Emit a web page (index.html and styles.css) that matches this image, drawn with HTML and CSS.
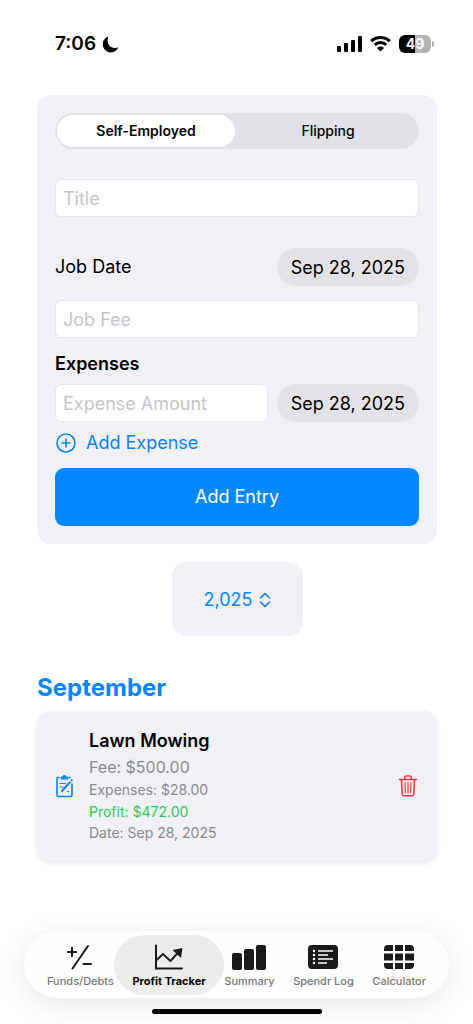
FILE: index.html
```html
<!DOCTYPE html>
<html lang="en">
<head>
<meta charset="utf-8">
<meta name="viewport" content="width=device-width, initial-scale=1">
<title>Profit Tracker</title>
<link rel="stylesheet" href="styles.css">
</head>
<body>
<div class="app">
  <header class="status">
    <div class="status-group">
      <span class="time">7:06</span>
      <svg class="moon" viewBox="0 0 17 17" aria-hidden="true"><path d="M6.200.6C3 1.800.8 4.800.8 8.300c0 4.500 3.500 8.100 8 8.100 3.500 0 6.300-1.900 7.500-5.100-1 .5-2 .7-3.100.7-4.500 0-7.600-3.100-7.600-7.500 0-1.400.1-2.700.6-3.900z"/></svg>
    </div>
    <div class="status-group">
      <svg class="signal" viewBox="0 0 25 16" aria-hidden="true"><rect y="10" width="4" height="6" rx="1"/><rect x="7" y="7" width="4" height="9" rx="1"/><rect x="14" y="4" width="4" height="12" rx="1"/><rect x="21" width="4" height="16" rx="1"/></svg>
      <svg class="wifi" viewBox="0 0 21 16" aria-hidden="true"><path class="arc" d="M1.200 5.200a13.400 13.400 0 0 1 18.600 0M4.800 8.900a8.200 8.200 0 0 1 11.400 0"/><path d="M10.500 15.500 7 12a5 5 0 0 1 7 0z"/></svg>
      <div class="battery"><span class="battery-level">49</span></div>
    </div>
  </header>

  <main class="content">
    <form class="card entry-form">
      <fieldset class="segmented" aria-label="Entry type">
        <label class="segment"><input type="radio" name="type" checked><span>Self-Employed</span></label>
        <label class="segment"><input type="radio" name="type"><span>Flipping</span></label>
      </fieldset>
      <input class="field title-field" type="text" placeholder="Title" aria-label="Title">
      <div class="row date-row">
        <span id="job-date">Job Date</span>
        <button class="date-pill" type="button" aria-describedby="job-date">Sep 28, 2025</button>
      </div>
      <input class="field" type="text" placeholder="Job Fee" aria-label="Job Fee">
      <h2 class="label">Expenses</h2>
      <div class="row">
        <input class="field" type="text" placeholder="Expense Amount" aria-label="Expense Amount">
        <button class="date-pill" type="button">Sep 28, 2025</button>
      </div>
      <button class="add-expense" type="button">
        <svg class="plus" viewBox="0 0 20 20" aria-hidden="true"><circle cx="10" cy="10" r="9"/><path d="M10 6v8M6 10h8"/></svg>
        Add Expense
      </button>
      <button class="submit" type="button">Add Entry</button>
    </form>

    <label class="year">
      <select class="year-select" aria-label="Year"><option>2,025</option></select>
      <svg class="chevrons" viewBox="0 0 12 16" aria-hidden="true"><path d="m1.500 6L6 1.500 10.500 6M1.500 10 6 14.500l4.500-4.500"/></svg>
    </label>

    <section class="month">
      <h2 class="month-title">September</h2>
      <article class="card job">
        <button class="icon-button" type="button" aria-label="Edit Lawn Mowing">
          <svg class="edit" viewBox="0 0 18 24" aria-hidden="true"><path d="M4 3.500H3.500A1.500 1.500 0 0 0 2 5v16a1.500 1.500 0 0 0 1.500 1.500h12A1.500 1.500 0 0 0 17 21V10M14 3.500h.8"/><path class="notes" d="M5 9.500h5.500M5 13h3M12.500 17.500h1"/><path class="pencil" d="M7 17l7.800-8.700M16.500 6.400l.3-.3"/><path class="clip" d="M6 4.700V3.200h1.600a1.800 1.800 0 0 1 3.600 0h1.600v1.500z"/></svg>
        </button>
        <div class="details">
          <h3 class="job-title">Lawn Mowing</h3>
          <p class="fee">Fee: $500.00</p>
          <p>Expenses: $28.00</p>
          <p class="profit">Profit: $472.00</p>
          <p>Date: Sep 28, 2025</p>
        </div>
        <button class="icon-button" type="button" aria-label="Delete Lawn Mowing">
          <svg class="trash" viewBox="0 0 18 22" aria-hidden="true"><path d="M.5 4.500h17M2.500 4.500l.7 14.700a1.700 1.700 0 0 0 1.700 1.600h8.200a1.700 1.700 0 0 0 1.700-1.600l.7-14.700M5.800 4.500V2.300a1.300 1.300 0 0 1 1.300-1.300h3.800a1.300 1.300 0 0 1 1.300 1.300v2.200"/><path class="slats" d="m6 7.500.3 10.500M9 7.500V18M12 7.500 11.700 18"/></svg>
        </button>
      </article>
    </section>
  </main>

  <footer class="bottom">
    <nav class="tabs" aria-label="Main">
      <a class="tab" href="#funds"><svg viewBox="0 0 32 26" aria-hidden="true"><g class="line"><path d="M8.500 24.500 24 2M4 8h8M8 4v8M19.500 20H27"/></g></svg>Funds/Debts</a>
      <a class="tab active" href="#profit" aria-current="page"><svg viewBox="0 0 32 26" aria-hidden="true"><g class="line"><path d="M3 1.500V24.500h26M3.500 16l6.500-6 7.500 7 8-9"/></g><path d="m19.500 6 10-2-1.500 10z"/></svg>Profit Tracker</a>
      <a class="tab" href="#summary"><svg class="bars" viewBox="0 0 34 26" aria-hidden="true"><rect x="0" y="9" width="10" height="17" rx="2"/><rect x="12" y="5" width="10" height="21" rx="2"/><rect x="24" y="1" width="10" height="25" rx="2"/></svg>Summary</a>
      <a class="tab" href="#log"><svg viewBox="0 0 32 26" aria-hidden="true"><rect x="1" y="1" width="30" height="24" rx="4"/><g class="rows"><path d="M11 7h15M11 11h10M11 15h15M11 19h9"/><path class="dots" d="M7 7h0M7 11h0M7 15h0M7 19h0"/></g></svg>Spendr Log</a>
      <a class="tab" href="#calculator"><svg viewBox="0 0 32 26" aria-hidden="true"><path d="M5 1h5v6H1V5a4 4 0 0 1 4-4zM12 1h8v6h-8zM22 1h5a4 4 0 0 1 4 4v2h-9zM1 9.500h9v7H1zM12 9.500h8v7h-8zM22 9.500h9v7h-9zM1 19h9v6H5a4 4 0 0 1-4-4zM12 19h8v6h-8zM22 19h9v2a4 4 0 0 1-4 4h-5z"/></svg>Calculator</a>
    </nav>
    <div class="home-indicator"></div>
  </footer>
</div>
</body>
</html>
```

FILE: styles.css
```css
* { box-sizing: border-box; }

body {
  margin: 0;
  background: #fff;
  color: #000;
  font-family: Inter, "Liberation Sans", sans-serif;
  font-size: 18px;
  line-height: 24px;
}

button, input, select { font: inherit; color: inherit; }
button { border: 0; padding: 0; background: none; cursor: pointer; }
h2, h3, p { margin: 0; }
svg { display: block; fill: currentColor; }

.app {
  display: flex;
  flex-direction: column;
  min-height: 100vh;
  overflow: hidden;
}

.status {
  display: flex;
  justify-content: space-between;
  padding: 32px 42px 39px 55px;
}
.status-group { display: flex; align-items: center; gap: 8px; }
.status-group:first-child { gap: 6px; }
.time { font-size: 19px; font-weight: 600; }
.moon { width: 17px; height: 17px; }
.signal { width: 25px; height: 16px; }
.wifi { width: 21px; height: 16px; }
.arc { fill: none; stroke: currentColor; stroke-width: 3; }
.battery {
  position: relative;
  width: 32px;
  border-radius: 6px;
  background: linear-gradient(90deg, #000 50%, #b3b3b3 50%);
  color: #fff;
  font-size: 14px;
  font-weight: 700;
  line-height: 18px;
  text-align: center;
}
.battery::after {
  content: "";
  position: absolute;
  left: 100%;
  top: 6px;
  width: 2px;
  height: 6px;
  margin-left: 1px;
  border-radius: 0 2px 2px 0;
  background: #b3b3b3;
}

.content {
  display: flex;
  flex-direction: column;
  padding: 0 36px 0 37px;
}

.card { background: #f1f0f6; border-radius: 14px; }

.entry-form {
  display: flex;
  flex-direction: column;
  padding: 18px;
}

.segmented {
  display: flex;
  gap: 4px;
  min-width: 0;
  margin: 0;
  padding: 2px;
  border: 0;
  border-radius: 18px;
  background: #e2e1e7;
  font-size: 14px;
  font-weight: 500;
}
.segment { flex: 1; position: relative; text-align: center; cursor: pointer; }
.segment input { position: absolute; inset: 0; margin: 0; opacity: 0; }
.segment span { display: block; border-radius: 16px; line-height: 32px; }
.segment input:checked + span { background: #fff; font-weight: 600; }

.field {
  width: 100%;
  min-width: 0;
  height: 38px;
  padding: 0 7px;
  border: 1px solid #e5e5e8;
  border-radius: 6px;
  background: #fff;
}
.field::placeholder { color: #c5c5c7; opacity: 1; }
.title-field { margin-top: 30px; }

.row {
  display: flex;
  align-items: center;
  justify-content: space-between;
  gap: 9px;
}
.date-row { margin: 31px 0 14px; }

.date-pill {
  flex: none;
  height: 38px;
  padding: 1px 14px 0;
  border-radius: 19px;
  background: #e3e2e7;
}

.label { margin: 14px 0 8px; font-size: 18px; font-weight: 600; }

.add-expense {
  display: flex;
  align-items: center;
  align-self: flex-start;
  gap: 10px;
  margin: 9px 0 13px;
  padding-left: 1px;
  color: #0a84ff;
}
.plus {
  width: 20px;
  height: 20px;
  fill: none;
  stroke: currentColor;
  stroke-width: 1.600;
  stroke-linecap: round;
}

.submit {
  height: 58px;
  border-radius: 9px;
  background: #0088ff;
  color: #fff;
}

.year {
  display: flex;
  align-items: center;
  align-self: center;
  gap: 6px;
  margin-top: 18px;
  padding: 26px 32px 24px;
  border-radius: 14px;
  background: #f1f0f6;
  color: #0a84ff;
}
.year-select {
  appearance: none;
  height: 24px;
  padding: 0;
  border: 0;
  background: none;
}
.chevrons {
  width: 12px;
  height: 16px;
  fill: none;
  stroke: currentColor;
  stroke-width: 1.600;
  stroke-linecap: round;
  stroke-linejoin: round;
}

.month { margin-top: 36px; }
.month-title {
  margin-bottom: 7px;
  color: #0a84ff;
  font-size: 24px;
  font-weight: 700;
  line-height: 32px;
}

.job {
  display: flex;
  align-items: center;
  padding: 18px;
  box-shadow: 0 2px 5px rgba(0, 0, 0, 0.1);
}
.icon-button { color: #0a84ff; }
.icon-button:last-child { color: #ff383c; padding-right: 2px; }
.edit {
  width: 18px;
  height: 24px;
  fill: none;
  stroke: currentColor;
  stroke-width: 1.600;
  stroke-linecap: round;
}
.notes { stroke-width: 1.200; }
.pencil { stroke-width: 2; }
.clip { fill: currentColor; stroke-width: 1; }
.trash {
  width: 18px;
  height: 22px;
  fill: none;
  stroke: currentColor;
  stroke-width: 1.600;
  stroke-linecap: round;
}
.slats { stroke-width: 1.200; }

.details {
  flex: 1;
  padding: 0 0 0 16px;
  color: #8a8a8e;
  font-size: 14px;
  line-height: 22px;
}
.job-title {
  margin-bottom: 2px;
  color: #000;
  font-size: 18px;
  font-weight: 600;
  line-height: 24px;
}
.fee { font-size: 16px; line-height: 24px; }
.profit { color: #34c759; }
.details p:last-child { line-height: 20px; }

.bottom { margin-top: auto; padding: 0 24px 10px; }

.tabs {
  display: flex;
  justify-content: space-between;
  padding: 13px 23px 9px;
  border-radius: 34px;
  background: #fefefe;
  box-shadow: 0 6px 30px rgba(0, 0, 0, 0.1);
}
.tab {
  position: relative;
  display: flex;
  flex-direction: column;
  align-items: center;
  gap: 4px;
  color: #77777a;
  font-size: 11px;
  font-weight: 500;
  line-height: 15px;
  text-decoration: none;
  white-space: nowrap;
}
.tab svg { width: 32px; height: 26px; color: #1a1a1a; }
.tab .bars { width: 34px; }
.tab.active { z-index: 0; color: #000; font-weight: 700; }
.tab.active::before {
  content: "";
  position: absolute;
  z-index: -1;
  inset: -9px -18px -6px;
  border-radius: 30px;
  background: #ececeb;
}
.line { fill: none; stroke: currentColor; stroke-width: 2; stroke-linecap: round; }
.rows { fill: none; stroke: #fff; stroke-width: 1.600; }
.dots { stroke-width: 2.400; stroke-linecap: round; }

.home-indicator {
  width: 40%;
  height: 5px;
  margin: 11px auto 0;
  border-radius: 3px;
  background: #000;
}
```
